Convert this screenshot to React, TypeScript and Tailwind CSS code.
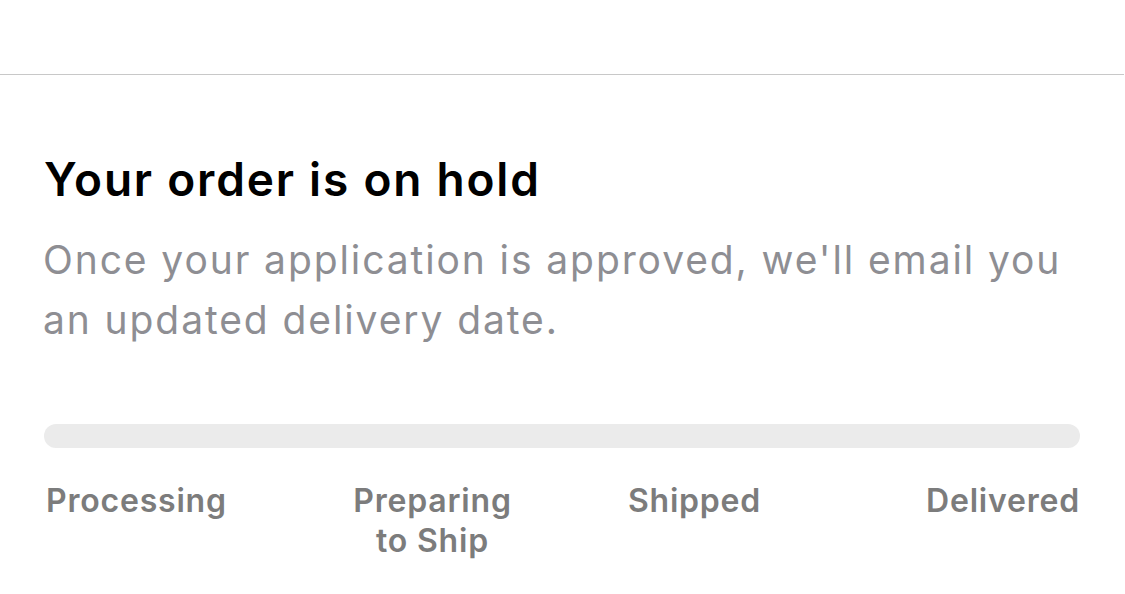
import React from "react";

export default function App() {
  const font = { fontFamily: "Inter, 'Noto Sans', sans-serif" };
  return (
    <div className="w-[1125px] h-[594px] bg-white overflow-hidden" style={font}>
      <div className="h-[74px]" />
      <div className="h-px bg-[#c8c8c8] mr-px" />
      <div className="pl-[44px] pr-[45px]">
        <h1 className="mt-[76px] text-[46px] leading-[56px] font-semibold text-black tracking-[1.8px]">
          Your order is on hold
        </h1>
        <p className="mt-[23px] -ml-[1px] text-[39px] leading-[60px] text-[#8e8e93] tracking-[1.9px]">
          Once your application is approved, we'll email you an updated delivery date.
        </p>
        <div className="mt-[74px] h-[24px] rounded-full bg-[#ebebeb]" />
        <div className="mt-[33px] grid grid-cols-4 text-[32px] leading-[40px] font-semibold text-[#7c7c7c] tracking-[0.8px]">
          <div className="text-left pl-[2px]">Processing</div>
          <div className="text-center">
            Preparing
            <br />
            to Ship
          </div>
          <div className="text-center pl-[6px]">Shipped</div>
          <div className="text-right">Delivered</div>
        </div>
      </div>
    </div>
  );
}
